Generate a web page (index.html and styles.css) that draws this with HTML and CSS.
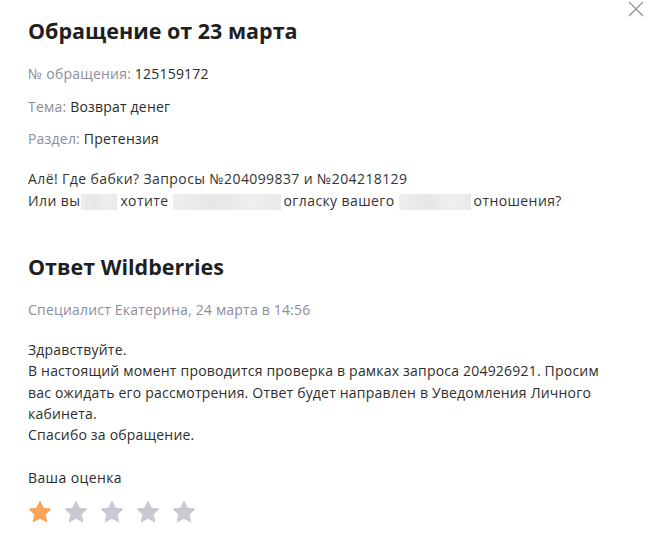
FILE: index.html
```html
<!DOCTYPE html>
<html lang="ru">
<head>
    <meta charset="UTF-8" />
    <title>Обращение от 23 марта</title>
    <link rel="stylesheet" href="styles.css">
</head>
<body>
    <div class="modal">
        <button class="close-btn" aria-label="Закрыть">
            <svg width="16" height="16" viewBox="0 0 16 16">
                <path d="M1 1 L15 15 M15 1 L1 15" stroke="#9d9daa" stroke-width="1.6" fill="none" />
            </svg>
        </button>

        <h1 class="title">Обращение от 23 марта</h1>

        <div class="meta">
            <p class="meta-row"><span class="label">№ обращения:</span> 125159172</p>
            <p class="meta-row"><span class="label">Тема:</span> Возврат денег</p>
            <p class="meta-row"><span class="label">Раздел:</span> Претензия</p>
        </div>

        <p class="message">
            Алё! Где бабки? Запросы №204099837 и №204218129<br>
            Или вы<span class="blur blur-1"></span>хотите <span class="blur blur-2"></span>огласку вашего <span class="blur blur-3"></span>отношения?
        </p>

        <h2 class="title answer-title">Ответ Wildberries</h2>
        <p class="author">Специалист Екатерина, 24 марта в 14:56</p>

        <p class="answer">
            Здравствуйте.<br>
            В настоящий момент проводится проверка в рамках запроса 204926921. Просим вас ожидать его рассмотрения. Ответ будет направлен в Уведомления Личного кабинета.<br>
            Спасибо за обращение.
        </p>

        <div class="rating">
            <div class="rating-label">Ваша оценка</div>
            <div class="stars">
                <svg class="star active" viewBox="0 0 24 24"><path d="M12 1.2l3.3 6.9 7.5 1-5.5 5.2 1.4 7.5L12 18.2l-6.7 3.6 1.4-7.5L1.2 9.1l7.5-1z" /></svg>
                <svg class="star" viewBox="0 0 24 24"><path d="M12 1.2l3.3 6.9 7.5 1-5.5 5.2 1.4 7.5L12 18.2l-6.7 3.6 1.4-7.5L1.2 9.1l7.5-1z" /></svg>
                <svg class="star" viewBox="0 0 24 24"><path d="M12 1.2l3.3 6.9 7.5 1-5.5 5.2 1.4 7.5L12 18.2l-6.7 3.6 1.4-7.5L1.2 9.1l7.5-1z" /></svg>
                <svg class="star" viewBox="0 0 24 24"><path d="M12 1.2l3.3 6.9 7.5 1-5.5 5.2 1.4 7.5L12 18.2l-6.7 3.6 1.4-7.5L1.2 9.1l7.5-1z" /></svg>
                <svg class="star" viewBox="0 0 24 24"><path d="M12 1.2l3.3 6.9 7.5 1-5.5 5.2 1.4 7.5L12 18.2l-6.7 3.6 1.4-7.5L1.2 9.1l7.5-1z" /></svg>
            </div>
        </div>
    </div>
</body>
</html>
```

FILE: styles.css
```css
body {
    margin: 0;
    background: #fff;
    font-family: 'Open Sans', 'Noto Sans', sans-serif;
    color: #2b2b2b;
    font-size: 14px;
    letter-spacing: 0.2px;
}

.modal {
    position: relative;
    padding: 17px 28px 20px;
}

.close-btn {
    position: absolute;
    top: 1px;
    right: 6px;
    padding: 0;
    border: none;
    background: none;
    cursor: pointer;
}

.title {
    margin: 0;
    font-size: 21.5px;
    line-height: 28px;
    font-weight: 700;
    color: #1f1f1f;
    letter-spacing: 0;
}

.meta {
    margin-top: 19px;
    display: flex;
    flex-direction: column;
    gap: 12.5px;
}

.meta-row {
    margin: 0;
    line-height: 20px;
}

.label {
    color: #8d8d9c;
}

.message {
    margin: 19px 0 0;
    line-height: 22px;
    letter-spacing: 0.4px;
    color: #333;
}

.blur {
    display: inline-block;
    vertical-align: -4px;
    height: 16px;
    background: linear-gradient(90deg, #eee 0%, #e6e6e6 40%, #efefef 70%, #e9e9e9 100%);
}

.blur-1 { width: 36px; margin: 0 3px 0 1px; }
.blur-2 { width: 108px; margin-right: 3px; }
.blur-3 { width: 72px; margin-right: 3px; }

.answer-title {
    margin-top: 41px;
}

.author {
    margin: 19px 0 0;
    line-height: 20px;
    color: #8d8d9c;
}

.answer {
    margin: 19px 0 0;
    line-height: 21.3px;
    max-width: 582px;
    color: #2e2e2e;
}

.rating {
    margin-top: 23px;
}

.rating-label {
    line-height: 20px;
    font-weight: 500;
    color: #2b2b2b;
    letter-spacing: 0.4px;
}

.stars {
    margin-top: 12px;
    display: flex;
    gap: 12px;
}

.star {
    width: 24px;
    height: 24px;
    fill: #c9c9d1;
    stroke: #c9c9d1;
    stroke-width: 1;
    stroke-linejoin: round;
}

.star.active {
    fill: #f9a45a;
    stroke: #f9a45a;
}
```
